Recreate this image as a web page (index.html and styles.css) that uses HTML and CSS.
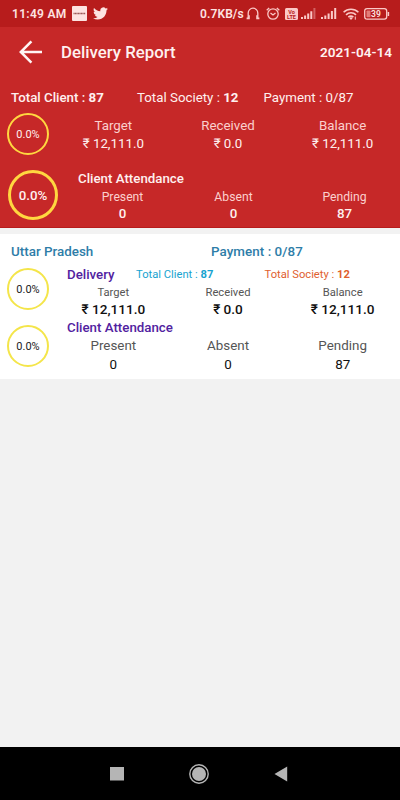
FILE: index.html
```
<!DOCTYPE html>
<html lang="en">
<head>
  <meta charset="UTF-8">
  <meta name="viewport" content="width=device-width, initial-scale=1.0">
  <title>Delivery Report</title>
  <link rel="stylesheet" href="styles.css">
</head>
<body>
  <div class="screen">
    <div class="status-bar">
      <span class="clock">11:49 AM</span>
      <svg class="note-icon" width="15" height="15" viewBox="0 0 15 15"><rect width="15" height="15" rx="1" fill="#fde3e1"/><path d="M1.5 7.5h12" stroke="#9c5a58" stroke-width="1.6" stroke-dasharray="1.2 .3"/></svg>
      <svg class="bird-icon" width="15" height="13" viewBox="0 2 24 20"><path fill="#fde3e1" d="M23.95 4.57a10 10 0 0 1-2.82.77 4.96 4.96 0 0 0 2.16-2.72c-.95.55-2 .95-3.13 1.18a4.92 4.92 0 0 0-8.38 4.48C7.69 8.1 4.07 6.13 1.64 3.16a4.82 4.82 0 0 0-.67 2.48c0 1.71.87 3.21 2.19 4.1a4.9 4.9 0 0 1-2.23-.62v.06a4.92 4.92 0 0 0 3.95 4.83 5 5 0 0 1-2.21.08 4.94 4.94 0 0 0 4.6 3.42A9.87 9.87 0 0 1 0 19.54a13.99 13.99 0 0 0 7.55 2.21c9.05 0 14-7.5 14-13.98 0-.21 0-.42-.02-.63a9.94 9.94 0 0 0 2.42-2.57z"/></svg>
      <span class="speed">0.7KB/s</span>
      <svg class="headset-icon" width="14" height="13" viewBox="0 0 14 13" fill="none" stroke="#fbc9c7"><path d="M2.2 11V6a4.8 4.8 0 0 1 9.6 0v5" stroke-width="1.3"/><path d="M.6 11.4h3.2M10.2 11.4h3.2M3 8.2v3M11 8.2v3" stroke-width="1.6"/></svg>
      <svg class="alarm-icon" width="14" height="13" viewBox="0 0 14 13" fill="none" stroke="#fbc9c7" stroke-width="1.3"><circle cx="7" cy="7" r="5.2"/><path d="M.7 3.2 3.2.9M13.3 3.2 10.8.9M4.5 6l2.5 2 2.5-2"/></svg>
      <svg class="volte-icon" width="13" height="12" viewBox="0 0 13 12"><rect width="13" height="12" rx="1.5" fill="#fbc9c7"/><text x="6.5" y="5.5" class="volte-text">Vo</text><text x="6.5" y="10.9" class="volte-text">LTE</text></svg>
      <svg class="signal-one" width="15" height="12" viewBox="0 0 15 12" fill="#fbc9c7"><path d="M0 9h2v2H0zM3.1 7.6h2V11h-2zM6.2 5.6h2V11h-2zM9.3 3.2h2V11h-2z"/><path opacity=".4" d="M12.4 0h2v11h-2z"/></svg>
      <svg class="signal-two" width="16" height="12" viewBox="0 0 16 12" fill="#fbc9c7"><path d="M0 9h2v2H0zM3.3 7.6h2V11h-2zM6.6 5.6h2V11h-2zM9.9 3h2v8h-2zM13.2 0h2v11h-2z"/></svg>
      <svg class="wifi-icon" width="16" height="12" viewBox="0 0 16 12" fill="none" stroke="#fbc9c7" stroke-width="1.6"><path d="M.6 4.2a10.6 10.6 0 0 1 14.8 0M3 6.8a7.2 7.2 0 0 1 10 0M5.3 9.2a3.9 3.9 0 0 1 5.1 0"/><path d="m8 12-1.8-1.9a2.6 2.6 0 0 1 3.6 0z" fill="#fbc9c7" stroke="none"/><path d="M12.3 8.5v3.2" stroke-width="1"/></svg>
      <svg class="battery-icon" width="26" height="12" viewBox="0 0 26 12"><rect x=".7" y=".7" width="22" height="10.4" rx="2.4" fill="none" stroke="#fbc9c7" stroke-width="1.3"/><rect x="2.5" y="2.5" width="4" height="6.8" rx=".8" fill="#e37c78"/><path d="M24.4 4v4" stroke="#fbc9c7" stroke-width="1.5"/><text x="11.9" y="8.9" class="battery-text">39</text></svg>
    </div>

    <header class="toolbar">
      <svg class="back" width="24" height="24" viewBox="0 0 24 24" fill="none" stroke="#fff5f4" stroke-width="2.5"><path d="M23 12H2M12.4 1.4 1.8 12l10.6 10.6"/></svg>
      <h1>Delivery Report</h1>
      <span class="date">2021-04-14</span>
    </header>

    <section class="summary">
      <div class="totals">
        <span class="total-client">Total Client : <b>87</b></span>
        <span class="total-society">Total Society : <b>12</b></span>
        <span class="payment">Payment : 0/87</span>
      </div>
      <div class="row delivery">
        <div class="ring">0.0%</div>
        <div class="stats">
          <div><span class="label">Target</span><span class="value">₹ 12,111.0</span></div>
          <div><span class="label">Received</span><span class="value">₹ 0.0</span></div>
          <div><span class="label">Balance</span><span class="value">₹ 12,111.0</span></div>
        </div>
      </div>
      <div class="row attendance">
        <div class="ring big">0.0%</div>
        <div class="content">
          <h2>Client Attendance</h2>
          <div class="stats">
            <div><span class="label">Present</span><span class="value">0</span></div>
            <div><span class="label">Absent</span><span class="value">0</span></div>
            <div><span class="label">Pending</span><span class="value">87</span></div>
          </div>
        </div>
      </div>
    </section>

    <section class="card">
      <div class="card-head">
        <span class="state">Uttar Pradesh</span>
        <span class="state-payment">Payment : 0/87</span>
      </div>
      <div class="row delivery">
        <div class="ring">0.0%</div>
        <div class="content">
          <div class="sub-head">
            <h2>Delivery</h2>
            <span class="total-client">Total Client : <b>87</b></span>
            <span class="total-society">Total Society : <b>12</b></span>
          </div>
          <div class="stats">
            <div><span class="label">Target</span><span class="value">₹ 12,111.0</span></div>
            <div><span class="label">Received</span><span class="value">₹ 0.0</span></div>
            <div><span class="label">Balance</span><span class="value">₹ 12,111.0</span></div>
          </div>
        </div>
      </div>
      <div class="row attendance">
        <div class="ring">0.0%</div>
        <div class="content">
          <h2>Client Attendance</h2>
          <div class="stats">
            <div><span class="label">Present</span><span class="value">0</span></div>
            <div><span class="label">Absent</span><span class="value">0</span></div>
            <div><span class="label">Pending</span><span class="value">87</span></div>
          </div>
        </div>
      </div>
    </section>

    <nav class="nav-bar">
      <svg width="14" height="14" viewBox="0 0 14 14"><rect width="14" height="13.5" fill="#b5b5b5"/></svg>
      <svg width="20" height="20" viewBox="0 0 20 20"><circle cx="10" cy="10" r="9.2" fill="none" stroke="#b5b5b5" stroke-width="1.4"/><circle cx="10" cy="10" r="7" fill="#b5b5b5"/></svg>
      <svg width="14" height="16" viewBox="0 0 14 16"><path d="M13.2.5v15L.5 8z" fill="#b5b5b5"/></svg>
    </nav>
  </div>
</body>
</html>
```
FILE: styles.css
```
* {
  box-sizing: border-box;
}

body {
  margin: 0;
  font-family: Roboto, "Noto Sans", sans-serif;
  background: #f2f2f2;
}

h1, h2 {
  margin: 0;
  font-weight: 500;
  white-space: nowrap;
}

span {
  white-space: nowrap;
}

svg {
  display: block;
  flex-shrink: 0;
}

.screen {
  display: flex;
  flex-direction: column;
  width: 400px;
  height: 800px;
  overflow: hidden;
}

/* status bar */
.status-bar {
  display: flex;
  align-items: center;
  height: 27px;
  padding-left: 12px;
  background: #b71c1c;
  color: #fde3e1;
  font-size: 12px;
  font-weight: 600;
}

.clock {
  width: 60px;
  letter-spacing: 0.3px;
}

.bird-icon {
  margin-left: 6px;
}

.speed {
  width: 45px;
  margin-left: 92px;
  letter-spacing: 0.1px;
}

.headset-icon {
  margin-left: 1px;
}

.alarm-icon {
  margin-left: 6px;
}

.volte-icon {
  margin-left: 5px;
}

.volte-text {
  font-size: 5.5px;
  font-weight: 700;
  text-anchor: middle;
  fill: #b71c1c;
}

.signal-one {
  margin-left: 3px;
}

.signal-two {
  margin-left: 5px;
}

.wifi-icon {
  margin-left: 6px;
}

.battery-icon {
  margin-left: 5px;
}

.battery-text {
  font-size: 8.5px;
  font-weight: 600;
  text-anchor: middle;
  fill: #fde3e1;
}

/* toolbar */
.toolbar {
  display: flex;
  align-items: center;
  height: 50px;
  padding: 0 8px 0 19px;
  background: #c62828;
  color: #fff0ef;
}

.toolbar h1 {
  margin-left: 18px;
  font-size: 16.8px;
}

.date {
  margin-left: auto;
  font-size: 13.6px;
  font-weight: 600;
}

/* rings and columns */
.row {
  display: flex;
}

.ring {
  display: flex;
  align-items: center;
  justify-content: center;
  flex-shrink: 0;
  width: 42px;
  height: 42px;
  margin-left: 7px;
  border: 2px solid #f4e54a;
  border-radius: 50%;
  font-size: 11px;
}

.content,
.row > .stats {
  flex: 1;
  margin-left: 7px;
}

.stats {
  display: grid;
  grid-template-columns: repeat(3, 1fr);
  text-align: center;
}

.label,
.value {
  display: block;
  height: 18px;
  line-height: 18px;
}

/* overall summary */
.summary {
  height: 151px;
  padding-top: 12px;
  background: #c62828;
  border-bottom: 1px solid #b71c1c;
  color: #fff0ef;
  font-size: 13.3px;
}

.totals {
  display: flex;
  height: 18px;
  padding-left: 11px;
  line-height: 18px;
}

.totals .total-client {
  width: 126px;
  font-weight: 500;
}

.totals .total-society {
  width: 126.5px;
}

.summary .label {
  color: #fbd0ce;
}

.summary .delivery {
  height: 57px;
  padding-top: 6px;
}

.summary .delivery .stats {
  padding-top: 4px;
}

.summary .ring {
  border-color: #ffd740;
}

.summary .ring.big {
  width: 50px;
  height: 50px;
  margin-left: 8px;
  margin-top: 6px;
  border-width: 3px;
  font-size: 13.3px;
  font-weight: 500;
}

.summary .attendance .content {
  margin-left: 9px;
}

.summary h2 {
  height: 18px;
  margin: 6px 0 0 11px;
  font-size: 13.3px;
  line-height: 18px;
}

.summary .attendance .label {
  font-size: 12.2px;
  height: 17px;
}

.summary .attendance .value {
  font-weight: 500;
}

/* state card */
.card {
  height: 145px;
  margin-top: 6px;
  padding-top: 8px;
  background: #fff;
  color: #111;
}

.card-head {
  display: flex;
  height: 20px;
  padding-left: 11px;
  color: #2e7da8;
  font-size: 13.4px;
  font-weight: 500;
  line-height: 20px;
}

.state {
  width: 200px;
}

.state-payment {
  letter-spacing: 0.05px;
}

.card .ring {
  margin-top: 6px;
  color: #222;
}

.card h2 {
  height: 18px;
  margin-left: 11px;
  color: #5122a0;
  font-size: 13.3px;
  line-height: 18px;
}

.card .delivery {
  height: 57px;
}

.sub-head {
  display: flex;
  height: 22px;
  padding-top: 4px;
  font-size: 11.2px;
  line-height: 18px;
}

.sub-head h2 {
  width: 69px;
}

.sub-head .total-client {
  width: 128.5px;
  color: #18a3d0;
}

.sub-head .total-society {
  color: #e0602f;
}

.card .label {
  color: #555;
}

.card .delivery .label {
  height: 16px;
  font-size: 11.2px;
}

.card .delivery .value {
  font-size: 13.6px;
  font-weight: 500;
  line-height: 19px;
}

.card .attendance {
  font-size: 13.4px;
}

.card .attendance .value {
  height: 19px;
  line-height: 19px;
}

/* android navigation */
.nav-bar {
  display: flex;
  align-items: center;
  justify-content: space-between;
  height: 53px;
  margin-top: auto;
  padding: 0 112px 0 110px;
  background: #000;
}
```
